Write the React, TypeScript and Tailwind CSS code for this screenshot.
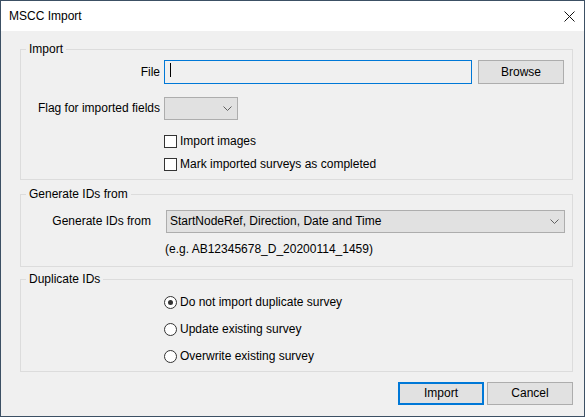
import React from "react";

function Chevron() {
  return (
    <svg width="9" height="5" viewBox="0 0 9 5" className="shrink-0">
      <polyline points="0.5,0.5 4.5,4.5 8.5,0.5" fill="none" stroke="#606060" strokeWidth="1" />
    </svg>
  );
}

function Checkbox({ label }: { label: string }) {
  return (
    <div className="flex items-center h-[13px] ml-[143px]">
      <div className="w-[13px] h-[13px] border border-[#333333] bg-white shrink-0" />
      <span className="ml-[3px] leading-[15px] whitespace-nowrap">{label}</span>
    </div>
  );
}

function Radio({ label, checked }: { label: string; checked?: boolean }) {
  return (
    <div className="flex items-center h-[13px] ml-[143px]">
      <div className="w-[13px] h-[13px] rounded-full border border-[#333333] bg-white shrink-0 flex items-center justify-center">
        {checked && <div className="w-[5px] h-[5px] rounded-full bg-[#333333]" />}
      </div>
      <span className="ml-[3px] leading-[15px] whitespace-nowrap">{label}</span>
    </div>
  );
}

function Group({
  title,
  className,
  children,
}: {
  title: string;
  className?: string;
  children: React.ReactNode;
}) {
  return (
    <fieldset className={`border border-[#dcdcdc] ${className ?? ""}`}>
      <legend className="ml-[5px] px-[3px] leading-[15px]">{title}</legend>
      {children}
    </fieldset>
  );
}

export default function App() {
  return (
    <div className="w-[585px] h-[417px] border border-[#3c5064] bg-[#f0f0f0] flex flex-col text-[12px] text-black font-['Liberation_Sans',Arial,sans-serif]">
      {/* title bar */}
      <div className="h-[30px] bg-white flex items-center justify-between pl-[8px] pr-[9px] shrink-0">
        <span className="leading-[15px]">MSCC Import</span>
        <svg width="11" height="11" viewBox="0 0 11 11">
          <path d="M0.5 0.5 L10.5 10.5 M10.5 0.5 L0.5 10.5" stroke="#111111" strokeWidth="1" />
        </svg>
      </div>

      <div className="flex-1 flex flex-col pl-[19px] pr-[11px] pt-[11px]">
        <Group title="Import">
          <div className="flex flex-col pt-[3px] pb-[8px] pr-[8px]">
            <div className="flex items-center h-[24px]">
              <span className="w-[139px] text-right leading-[15px] whitespace-nowrap">File</span>
              <div className="ml-[4px] w-[308px] h-[24px] border border-[#0078d7] bg-[#f0f0f0] flex items-start pt-[2px] pl-[5px]">
                <div className="w-[1px] h-[14px] bg-black" />
              </div>
              <button className="ml-[6px] w-[86px] h-[24px] border border-[#adadad] bg-[#e1e1e1] leading-[15px]">
                Browse
              </button>
            </div>
            <div className="flex items-center h-[23px] mt-[13px]">
              <span className="w-[139px] text-right leading-[15px] whitespace-nowrap">Flag for imported fields</span>
              <div className="ml-[4px] w-[74px] h-[23px] border border-[#adadad] bg-[#e1e1e1] flex items-center justify-end pr-[5px]">
                <Chevron />
              </div>
            </div>
            <div className="mt-[15px]">
              <Checkbox label="Import images" />
            </div>
            <div className="mt-[10px]">
              <Checkbox label="Mark imported surveys as completed" />
            </div>
          </div>
        </Group>

        <Group title="Generate IDs from" className="mt-[7px]">
          <div className="flex flex-col pt-[8px] pb-[9px] pr-[7px]">
            <div className="flex items-center h-[23px]">
              <span className="w-[130px] text-right leading-[15px] whitespace-nowrap">Generate IDs from</span>
              <div className="ml-[15px] flex-1 h-[23px] border border-[#adadad] bg-[#e1e1e1] flex items-center justify-between pl-[3px] pr-[5px]">
                <span className="leading-[15px]">StartNodeRef, Direction, Date and Time</span>
                <Chevron />
              </div>
            </div>
            <span className="mt-[9px] ml-[144px] leading-[15px]">(e.g. AB12345678_D_20200114_1459)</span>
          </div>
        </Group>

        <Group title="Duplicate IDs" className="mt-[5px]">
          <div className="flex flex-col gap-[14px] pt-[9px] pb-[8px]">
            <Radio label="Do not import duplicate survey" checked />
            <Radio label="Update existing survey" />
            <Radio label="Overwrite existing survey" />
          </div>
        </Group>

        <div className="flex justify-end gap-[3px] mt-[10px]">
          <button className="w-[86px] h-[23px] border-2 border-[#0078d7] bg-[#e1e1e1] leading-[15px]">
            Import
          </button>
          <button className="w-[86px] h-[23px] border border-[#adadad] bg-[#e1e1e1] leading-[15px]">
            Cancel
          </button>
        </div>
      </div>
    </div>
  );
}
